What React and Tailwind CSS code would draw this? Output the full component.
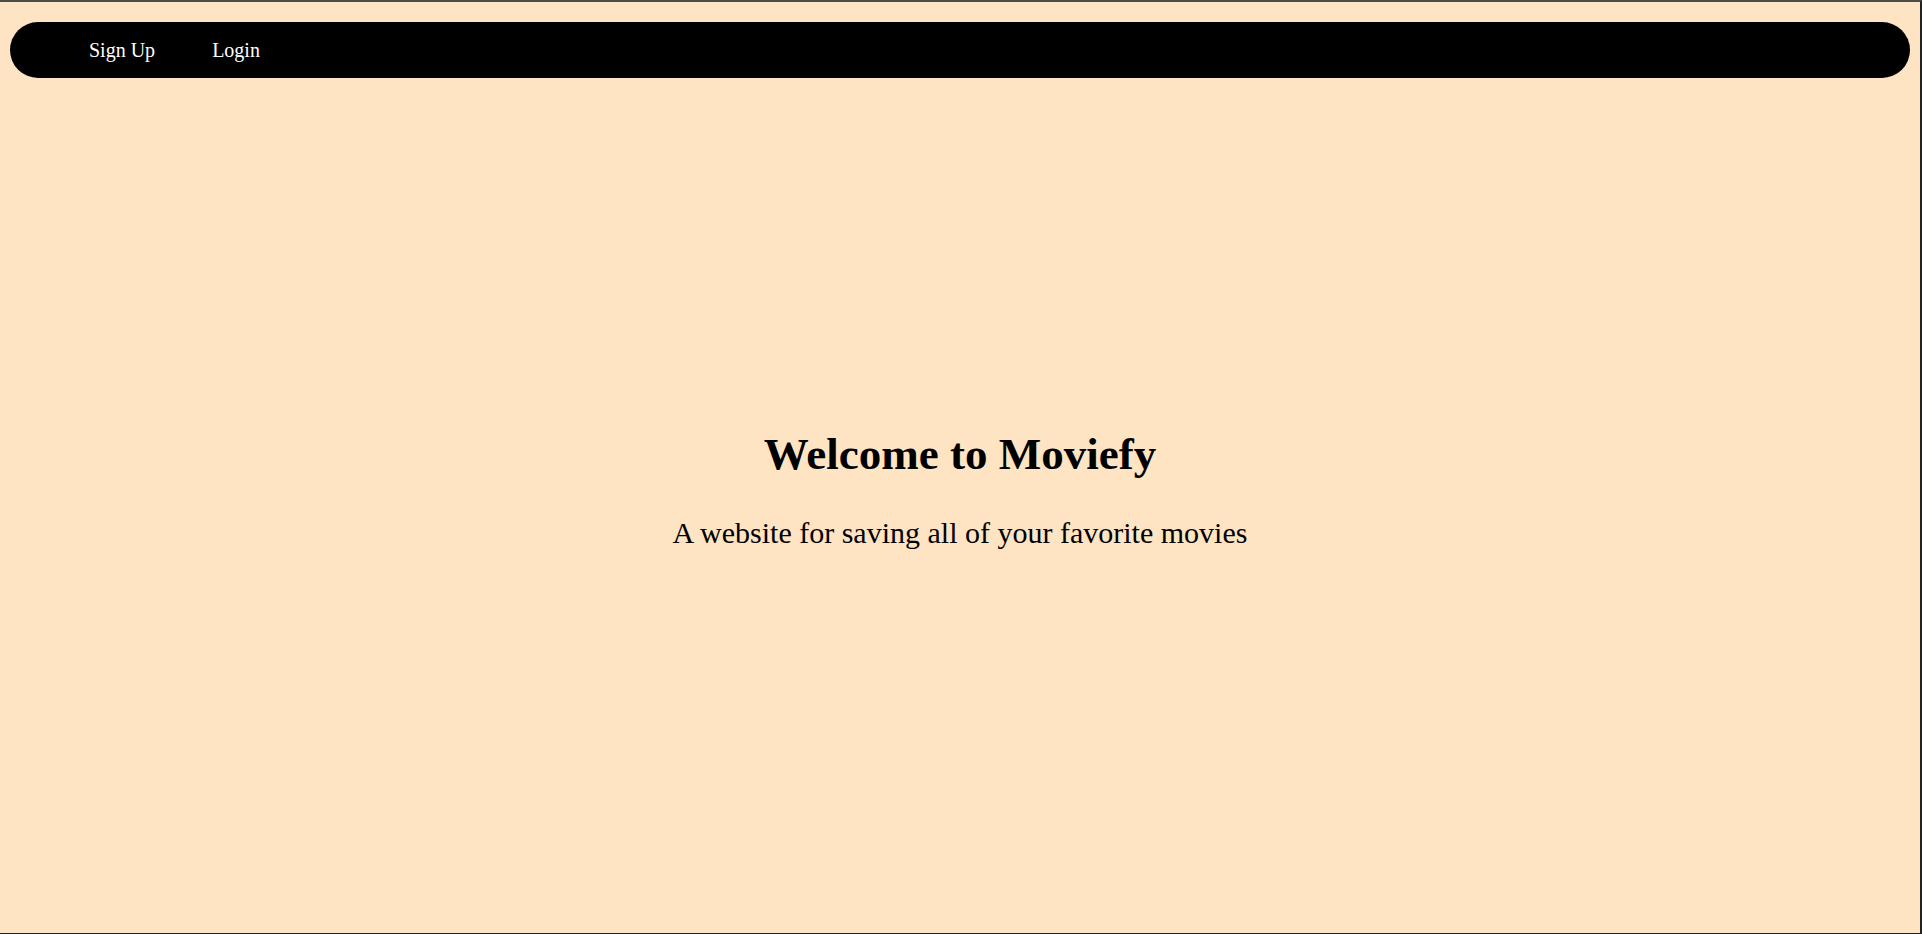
const links = ["Sign Up", "Login"];

const Navbar = () => {
    return (
        <nav className="mx-[10px] mt-[20px] h-[56px] rounded-full bg-black flex items-center pl-[79px] gap-[57px]">
            {links.map((link) => (
                <a key={link} href="#" className="text-white text-[20px] leading-[23px]">
                    {link}
                </a>
            ))}
        </nav>
    );
};

const App = () => {
    return (
        <div
            className="h-[934px] bg-[#ffe4c4] border-t-2 border-t-[#4b4b4b] border-r-2 border-r-[#222222] border-b border-b-[#222222] overflow-hidden"
            style={{ fontFamily: '"Liberation Serif", "Times New Roman", serif' }}
        >
            <Navbar />
            <main className="text-center text-black">
                <h1 className="mt-[351px] text-[45px] leading-[50px] font-bold">Welcome to Moviefy</h1>
                <p className="mt-[37px] text-[30px] leading-[33px]">A website for saving all of your favorite movies</p>
            </main>
        </div>
    );
};

export default App;
